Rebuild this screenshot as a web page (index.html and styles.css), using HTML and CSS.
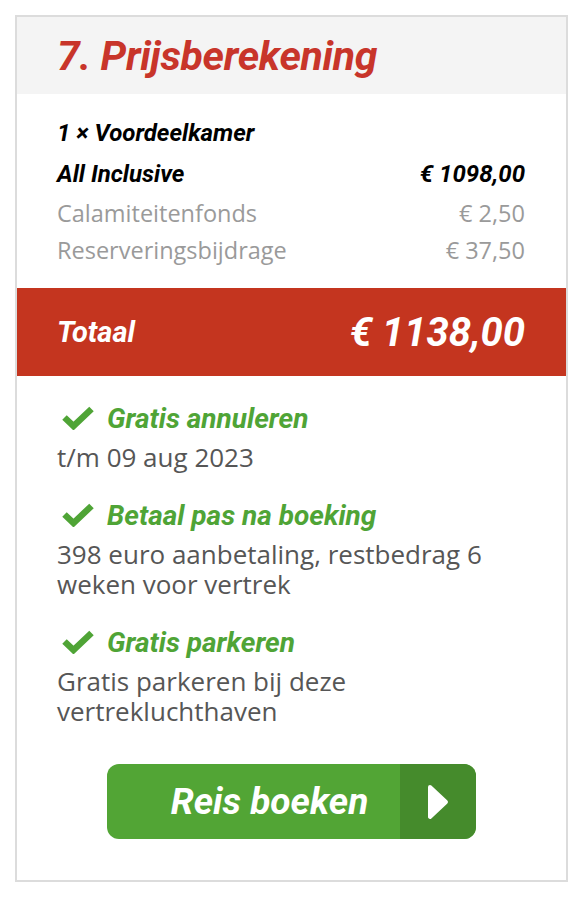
FILE: index.html
```html
<!DOCTYPE html>
<html lang="nl">
<head>
<meta charset="utf-8">
<link rel="stylesheet" href="styles.css">
</head>
<body>
<div class="card">
  <div class="card-head">
    <h2 class="title">7. Prijsberekening</h2>
  </div>
  <div class="lines">
    <div class="line strong"><span>1 × Voordeelkamer</span></div>
    <div class="line strong"><span>All Inclusive</span><span>€ 1098,00</span></div>
    <div class="line muted"><span>Calamiteitenfonds</span><span>€ 2,50</span></div>
    <div class="line muted"><span>Reserveringsbijdrage</span><span>€ 37,50</span></div>
  </div>
  <div class="total">
    <span class="total-label">Totaal</span>
    <span class="total-amount">€ 1138,00</span>
  </div>
  <div class="perks">
    <div class="perk">
      <div class="perk-head">
        <svg class="check" viewBox="0 0 32 24" width="32" height="24"><path d="M2.5 11.5 L11.5 20 L29.5 3" fill="none" stroke="#4fa436" stroke-width="6.5" stroke-linejoin="miter"/></svg>
        <span>Gratis annuleren</span>
      </div>
      <p class="perk-text">t/m 09 aug 2023</p>
    </div>
    <div class="perk">
      <div class="perk-head">
        <svg class="check" viewBox="0 0 32 24" width="32" height="24"><path d="M2.5 11.5 L11.5 20 L29.5 3" fill="none" stroke="#4fa436" stroke-width="6.5" stroke-linejoin="miter"/></svg>
        <span>Betaal pas na boeking</span>
      </div>
      <p class="perk-text">398 euro aanbetaling, restbedrag 6 weken voor vertrek</p>
    </div>
    <div class="perk">
      <div class="perk-head">
        <svg class="check" viewBox="0 0 32 24" width="32" height="24"><path d="M2.5 11.5 L11.5 20 L29.5 3" fill="none" stroke="#4fa436" stroke-width="6.5" stroke-linejoin="miter"/></svg>
        <span>Gratis parkeren</span>
      </div>
      <p class="perk-text">Gratis parkeren bij deze vertrekluchthaven</p>
    </div>
  </div>
  <div class="cta-wrap">
    <button class="cta">
      <span class="cta-label">Reis boeken</span>
      <span class="cta-arrow"><svg viewBox="0 0 22 36" width="22" height="36"><path d="M3 3 L19 18 L3 33 Z" fill="#fff" stroke="#fff" stroke-width="4" stroke-linejoin="round"/></svg></span>
    </button>
  </div>
</div>
</body>
</html>
```
FILE: styles.css
```css
* { box-sizing: border-box; }
html, body { margin: 0; padding: 0; background: #fff; }
body { padding: 15px 14px 0 15px; font-family: "Open Sans", sans-serif; }

.card {
  width: 553px;
  border: 2px solid #dcdcdc;
  background: #fff;
}
.card-head {
  background: #f4f4f4;
  height: 77px;
  padding: 0 40px;
  display: flex;
  align-items: center;
}
.title {
  margin: 0;
  font-family: Roboto, sans-serif;
  font-style: italic;
  font-weight: 700;
  font-size: 41px;
  letter-spacing: -0.3px;
  color: #c8352a;
}
.lines {
  padding: 18px 41px 20px 40px;
  display: flex;
  flex-direction: column;
}
.line {
  display: flex;
  justify-content: space-between;
  align-items: center;
}
.line.strong {
  font-family: Roboto, sans-serif;
  font-style: italic;
  font-weight: 700;
  font-size: 24px;
  color: #000;
  height: 41px;
}
.line.muted {
  font-size: 23.5px;
  color: #9a9a9a;
  height: 37px;
}
.total {
  background: #c4351f;
  height: 88px;
  padding: 0 41px 0 40px;
  display: flex;
  justify-content: space-between;
  align-items: center;
  color: #fff;
  font-family: Roboto, sans-serif;
  font-style: italic;
  font-weight: 700;
}
.total-label { font-size: 29px; }
.total-amount { font-size: 40px; }
.perks {
  padding: 25px 40px 0 40px;
}
.perk { margin-bottom: 26px; }
.perk-head {
  display: flex;
  align-items: center;
  gap: 13px;
  font-family: Roboto, sans-serif;
  font-style: italic;
  font-weight: 700;
  font-size: 28px;
  color: #4fa436;
  padding-left: 5px;
  height: 34px;
}
.perk-text {
  margin: 7px 0 0 0;
  font-size: 26px;
  line-height: 30px;
  color: #565656;
}
.cta-wrap {
  display: flex;
  justify-content: center;
  padding: 12px 0 41px 0;
}
.cta {
  display: flex;
  width: 369px;
  height: 75px;
  border: 0;
  padding: 0;
  border-radius: 12px;
  overflow: hidden;
  background: #52a535;
  cursor: pointer;
}
.cta-label {
  flex: 1;
  display: flex;
  align-items: center;
  justify-content: center;
  padding-left: 32px;
  color: #fff;
  font-family: Roboto, sans-serif;
  font-style: italic;
  font-weight: 700;
  font-size: 37px;
}
.cta-arrow {
  width: 76px;
  background: #458b2c;
  display: flex;
  align-items: center;
  justify-content: center;
}
```
